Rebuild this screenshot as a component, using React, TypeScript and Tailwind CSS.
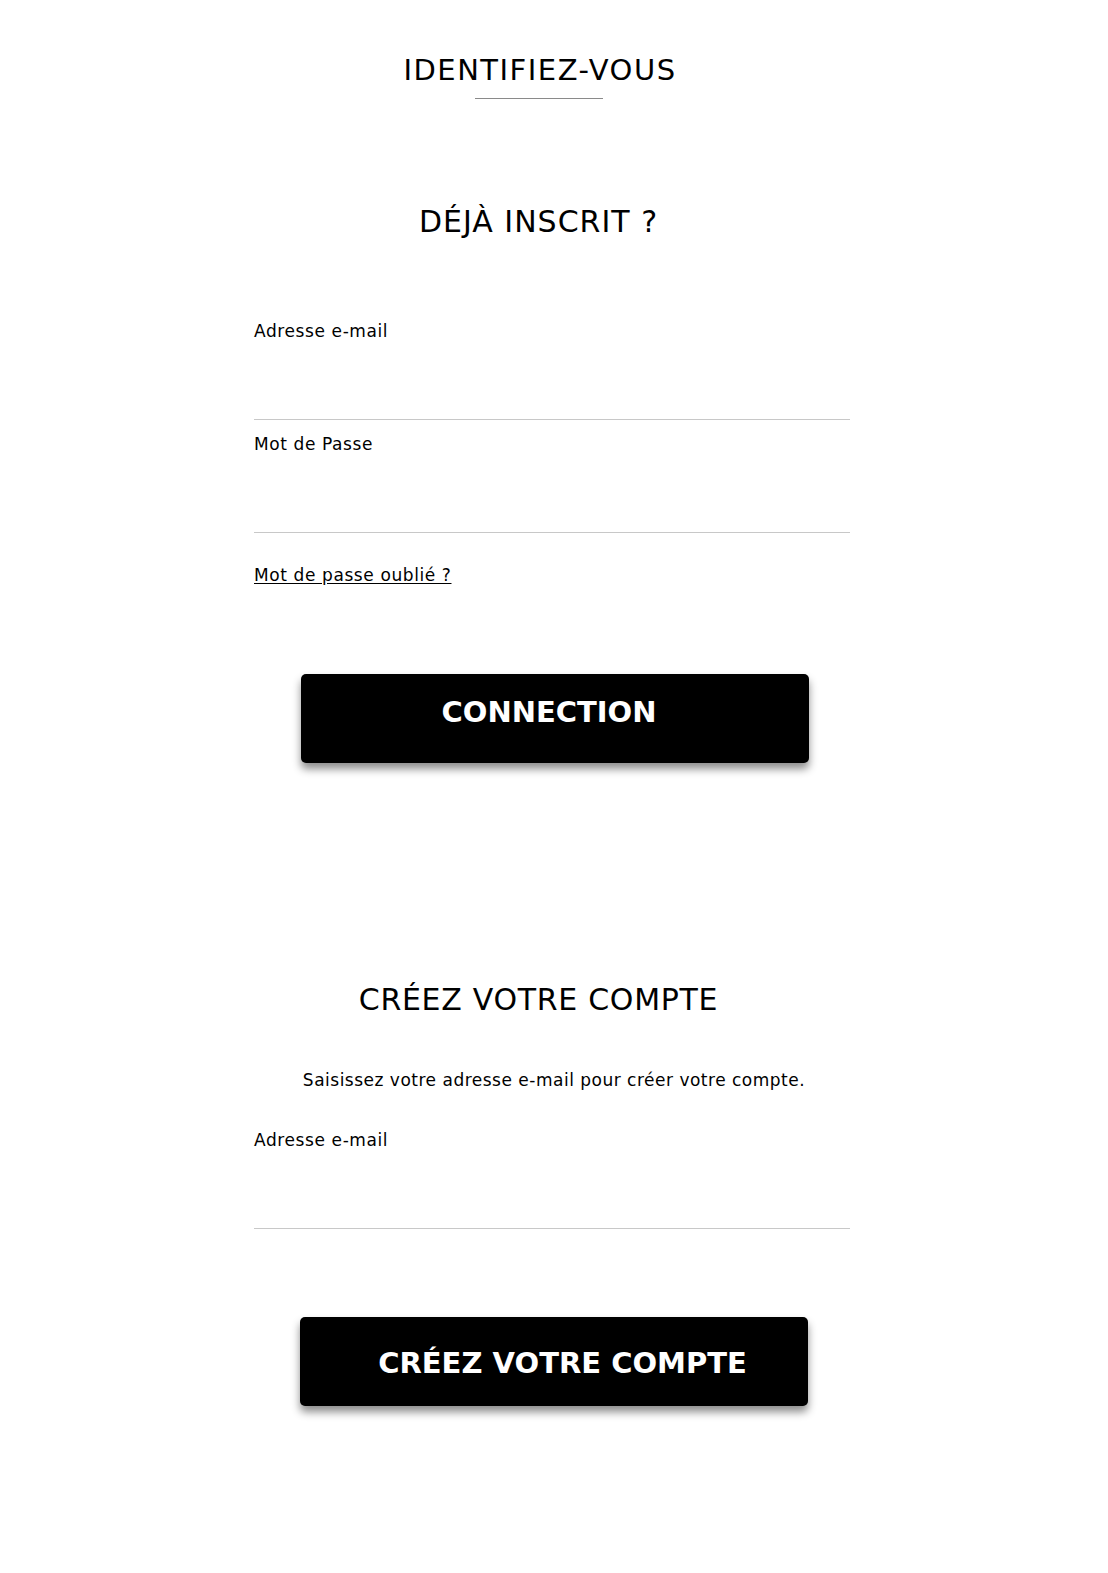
import React from 'react'

const font = { fontFamily: '"DejaVu Sans", "Liberation Sans", sans-serif' }

const Field: React.FC<{ label: string; type?: string }> = ({ label, type = 'text' }) => (
  <div className="flex flex-col">
    <label className="text-[17px] leading-[22px] tracking-[0.6px] text-black">{label}</label>
    <input type={type} className="h-[78px] w-full border-b border-[#c8c8c8] bg-transparent outline-none" />
  </div>
)

const BigButton: React.FC<{ children: React.ReactNode; className?: string }> = ({ children, className = '' }) => (
  <button
    className={`h-[89px] w-[508px] rounded-[5px] bg-black text-[29px] font-bold text-white shadow-[0_6px_8px_rgba(0,0,0,0.45)] ${className}`}
  >
    {children}
  </button>
)

export default function App() {
  return (
    <div className="min-h-[1573px] w-full bg-white text-black" style={font}>
      <div className="ml-[254px] w-[596px] pt-[53px]">
        {/* page title */}
        <div className="flex flex-col items-center pr-[27px]">
          <h1 className="pl-[3px] text-[29px] leading-[34px] font-normal tracking-[1.5px]">IDENTIFIEZ-VOUS</h1>
          <div className="mt-[11px] h-px w-[128px] bg-[#8a8a8a]" />
        </div>

        <h2 className="mt-[105px] pr-[27px] text-center text-[30px] leading-[36px] font-normal tracking-[1px]">DÉJÀ INSCRIT ?</h2>

        <form className="mt-[80px]" onSubmit={(e) => e.preventDefault()}>
          <Field label="Adresse e-mail" type="email" />
          <div className="mt-[13px]">
            <Field label="Mot de Passe" type="password" />
          </div>
          <a href="#" className="mt-[31px] inline-block text-[17px] leading-[22px] tracking-[0.6px] text-black underline underline-offset-2">
            Mot de passe oublié ?
          </a>
          <div className="mt-[86px]">
            <BigButton className="ml-[47px] pb-[12px] pr-[12px]">CONNECTION</BigButton>
          </div>
        </form>

        <h2 className="mt-[219px] pr-[27px] text-center text-[30px] leading-[36px] font-normal tracking-[0.7px]">CRÉEZ VOTRE COMPTE</h2>
        <p className="mt-[51px] pl-[4px] text-center text-[17px] leading-[22px] tracking-[0.5px]">Saisissez votre adresse e-mail pour créer votre compte.</p>

        <form className="mt-[38px]" onSubmit={(e) => e.preventDefault()}>
          <Field label="Adresse e-mail" type="email" />
          <div className="mt-[88px]">
            <BigButton className="ml-[46px] pl-[17px] pt-[5px]">CRÉEZ VOTRE COMPTE</BigButton>
          </div>
        </form>
      </div>
    </div>
  )
}
